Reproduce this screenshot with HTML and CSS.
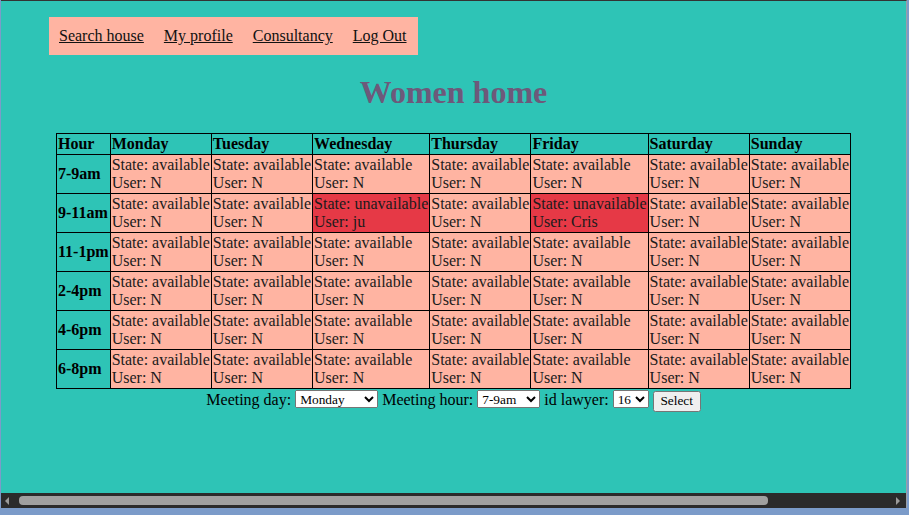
FILE: index.html
```html
<!DOCTYPE html>
<html>
<head>
<meta charset="utf-8">
<title>Women home</title>
<link rel="stylesheet" href="styles.css">
</head>
<body>
<div class="window">
  <div class="page">
    <nav class="nav">
      <a href="#">Search house</a>
      <a href="#">My profile</a>
      <a href="#">Consultancy</a>
      <a href="#">Log Out</a>
    </nav>
    <h1 class="title">Women home</h1>
    <table class="schedule">
      <tr><th>Hour</th><th>Monday</th><th>Tuesday</th><th>Wednesday</th><th>Thursday</th><th>Friday</th><th>Saturday</th><th>Sunday</th></tr>
      <tr><th>7-9am</th><td>State: available<br>User: N</td><td>State: available<br>User: N</td><td>State: available<br>User: N</td><td>State: available<br>User: N</td><td>State: available<br>User: N</td><td>State: available<br>User: N</td><td>State: available<br>User: N</td></tr>
      <tr><th>9-11am</th><td>State: available<br>User: N</td><td>State: available<br>User: N</td><td class="busy">State: unavailable<br>User: ju</td><td>State: available<br>User: N</td><td class="busy">State: unavailable<br>User: Cris</td><td>State: available<br>User: N</td><td>State: available<br>User: N</td></tr>
      <tr><th>11-1pm</th><td>State: available<br>User: N</td><td>State: available<br>User: N</td><td>State: available<br>User: N</td><td>State: available<br>User: N</td><td>State: available<br>User: N</td><td>State: available<br>User: N</td><td>State: available<br>User: N</td></tr>
      <tr><th>2-4pm</th><td>State: available<br>User: N</td><td>State: available<br>User: N</td><td>State: available<br>User: N</td><td>State: available<br>User: N</td><td>State: available<br>User: N</td><td>State: available<br>User: N</td><td>State: available<br>User: N</td></tr>
      <tr><th>4-6pm</th><td>State: available<br>User: N</td><td>State: available<br>User: N</td><td>State: available<br>User: N</td><td>State: available<br>User: N</td><td>State: available<br>User: N</td><td>State: available<br>User: N</td><td>State: available<br>User: N</td></tr>
      <tr><th>6-8pm</th><td>State: available<br>User: N</td><td>State: available<br>User: N</td><td>State: available<br>User: N</td><td>State: available<br>User: N</td><td>State: available<br>User: N</td><td>State: available<br>User: N</td><td>State: available<br>User: N</td></tr>
    </table>
    <form class="booking">
      Meeting day: <select class="sel sel-day"><option>Monday</option><option>Tuesday</option><option>Wednesday</option><option>Thursday</option><option>Friday</option><option>Saturday</option><option>Sunday</option></select>
      Meeting hour: <select class="sel sel-hour"><option>7-9am</option><option>9-11am</option><option>11-1pm</option><option>2-4pm</option><option>4-6pm</option><option>6-8pm</option></select>
      id lawyer: <select class="sel sel-id"><option>16</option></select>
      <button type="button" class="btn">Select</button>
    </form>
  </div>
  <div class="hscroll">
    <span class="arrow arrow-left"></span>
    <div class="track"><div class="thumb"></div></div>
    <span class="arrow arrow-right"></span>
  </div>
</div>
</body>
</html>
```
FILE: styles.css
```css
html, body {
  margin: 0;
  padding: 0;
}
body {
  background: #7b9bc9;
  width: 909px;
  height: 515px;
  overflow: hidden;
  font-family: "Liberation Serif", "Times New Roman", serif;
  font-size: 16px;
  color: #000;
}
.window {
  margin-left: 1px;
  width: 905px;
  height: 507px;
  border-top: 1px solid #333333;
  border-right: 1px solid #9a9fa8;
  background: #2ec4b6;
  display: flex;
  flex-direction: column;
}
.page {
  flex: 1;
  padding: 16px 8px 0 8px;
}
.nav {
  display: inline-flex;
  gap: 20px;
  margin-left: 40px;
  padding: 10px 11px 10px 10px;
  background: #ffb4a2;
}
.nav a {
  color: #111;
  text-decoration: underline;
  line-height: 18px;
}
.title {
  text-align: center;
  font-size: 32px;
  font-weight: bold;
  color: #6d597a;
  margin: 19px 0 22px;
  line-height: 37px;
}
.schedule {
  border-collapse: collapse;
  margin: 0 auto;
}
.schedule th, .schedule td {
  border: 1px solid #000;
  padding: 1px;
  text-align: left;
  vertical-align: middle;
  line-height: 18px;
}
.schedule th {
  background: #2ec4b6;
  font-weight: bold;
}
.schedule td {
  background: #ffb4a2;
  color: #1b1b1b;
  white-space: nowrap;
}
.schedule td.busy {
  background: #e63946;
}
.booking {
  text-align: center;
  margin: 0;
  line-height: 21px;
}
.sel {
  font-family: "Liberation Serif", "Times New Roman", serif;
  font-size: 13.33px;
  height: 18px;
  vertical-align: 1px;
}
.sel-day { width: 83px; }
.sel-hour { width: 63px; }
.sel-id { width: 36px; }
.btn {
  font-family: "Liberation Serif", "Times New Roman", serif;
  font-size: 13.33px;
  width: 48px;
  height: 21px;
  padding: 0;
  vertical-align: 0;
}
.hscroll {
  height: 15px;
  background: #2b2b2b;
  display: flex;
  align-items: center;
}
.arrow {
  width: 0;
  height: 0;
  border-top: 4px solid transparent;
  border-bottom: 4px solid transparent;
}
.arrow-left {
  margin-left: 4px;
  border-right: 4px solid #9a9a9a;
}
.arrow-right {
  margin-right: 6px;
  border-left: 4px solid #9a9a9a;
}
.track {
  flex: 1;
  padding: 0 128px 0 10px;
}
.thumb {
  height: 9px;
  border-radius: 4px;
  background: #a0a0a0;
}
```
